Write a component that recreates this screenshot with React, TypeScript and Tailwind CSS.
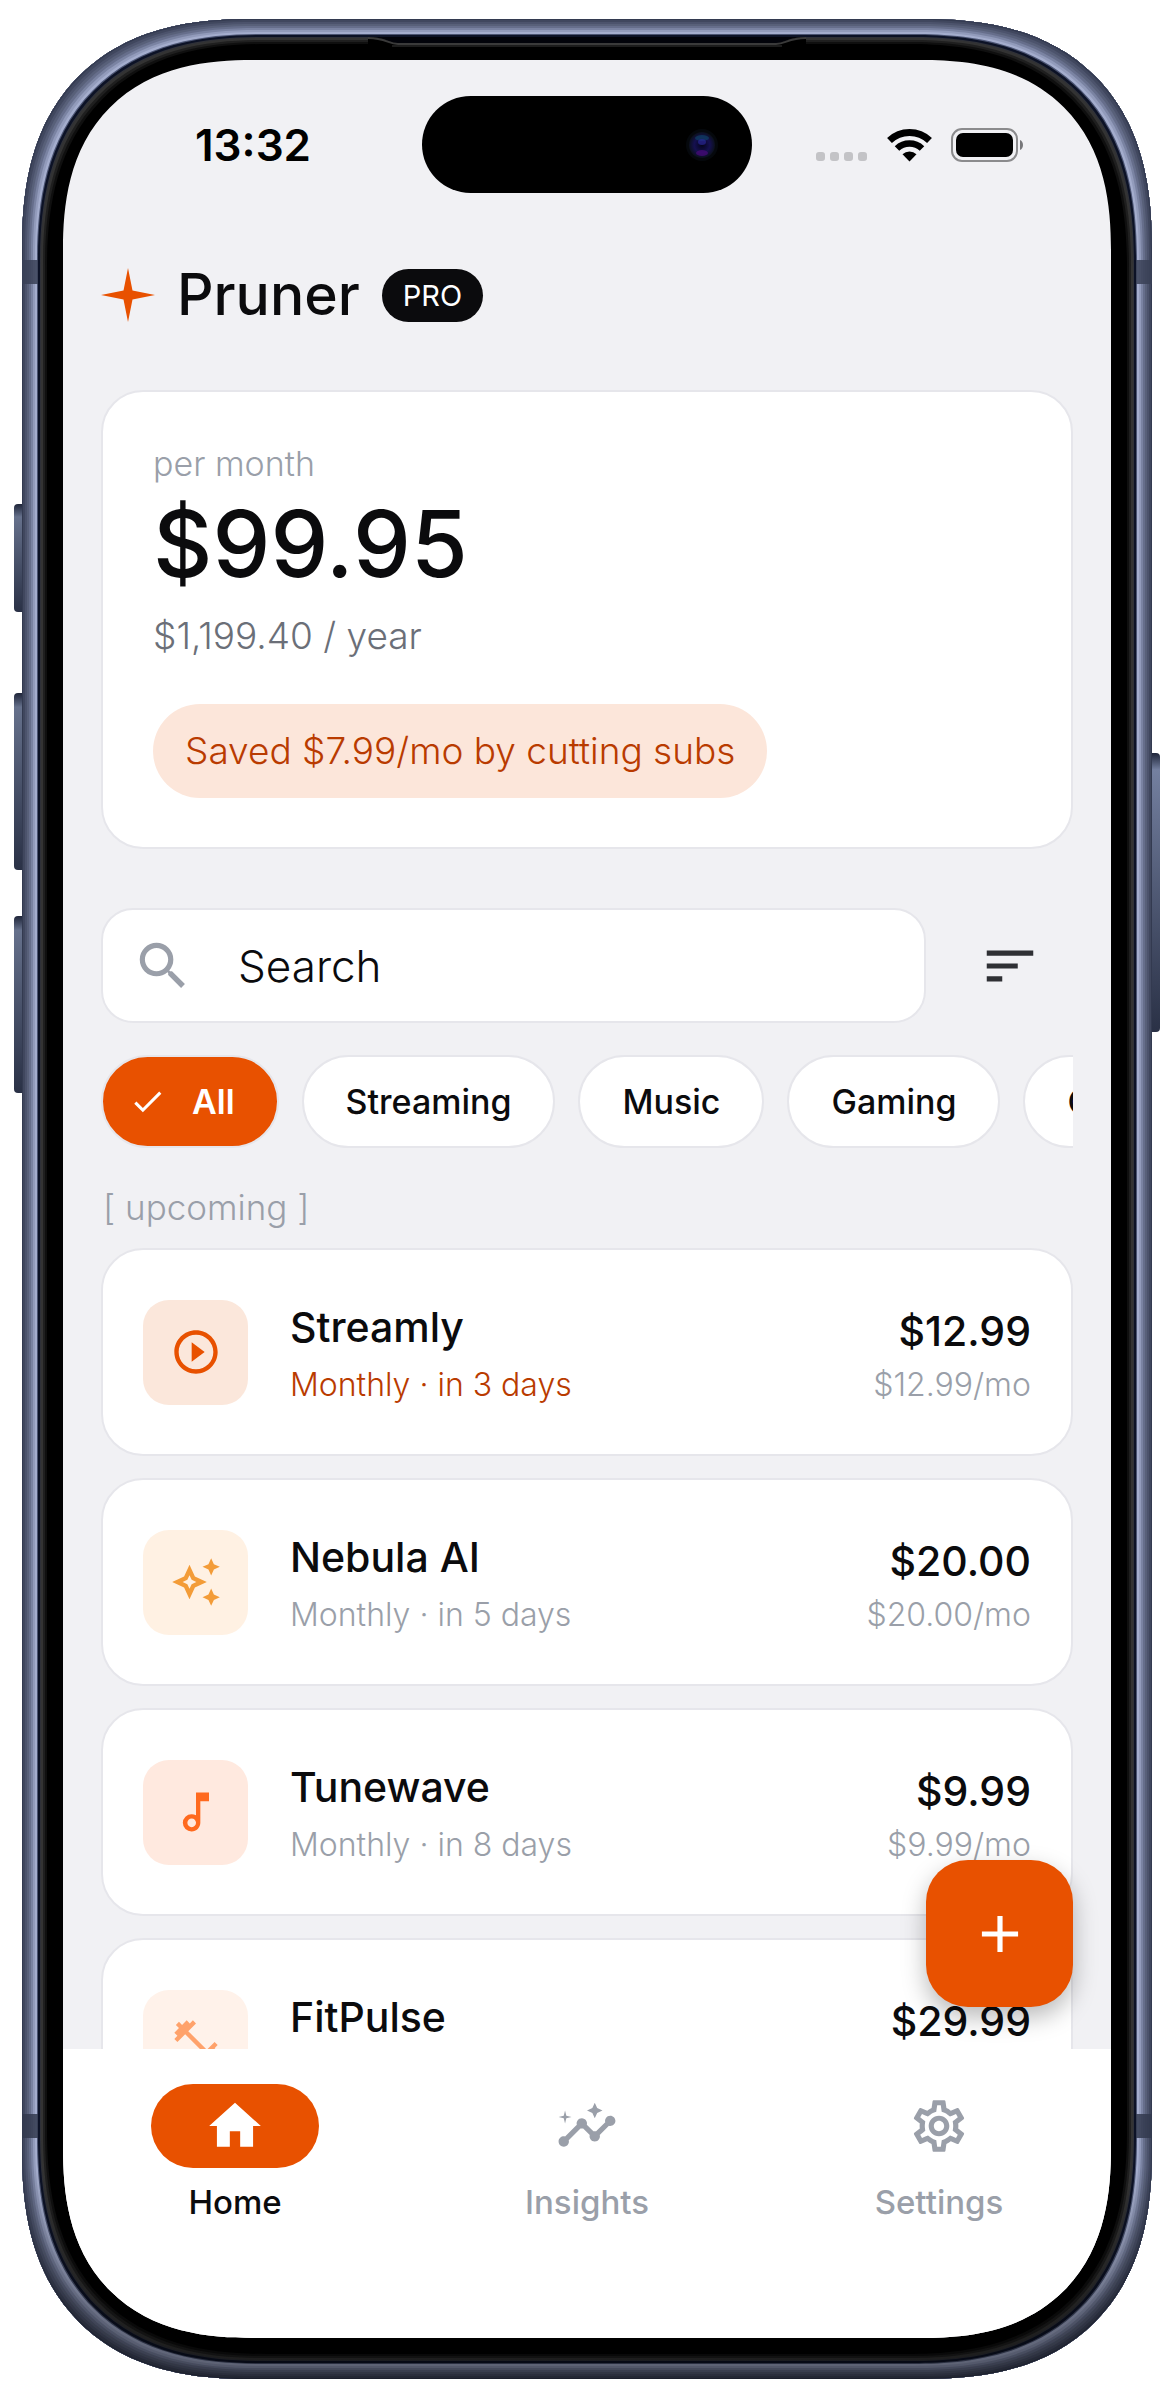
import { useState } from 'react';
import type { IconType } from 'react-icons';
import {
  MdAdd,
  MdCheck,
  MdFitnessCenter,
  MdHome,
  MdInsights,
  MdOutlineAutoAwesome,
  MdOutlineMusicNote,
  MdOutlineSettings,
  MdPlayCircleOutline,
  MdSearch,
  MdSort,
} from 'react-icons/md';

interface Subscription {
  name: string;
  due: string;
  price: string;
  icon: IconType;
  tile: string;
  soon?: boolean;
}

const subscriptions: Subscription[] = [
  { name: 'Streamly', due: 'Monthly · in 3 days', price: '$12.99', icon: MdPlayCircleOutline, tile: 'bg-[#fbe7db] text-[#e85100]', soon: true },
  { name: 'Nebula AI', due: 'Monthly · in 5 days', price: '$20.00', icon: MdOutlineAutoAwesome, tile: 'bg-[#fff1e3] text-[#f39c38]' },
  { name: 'Tunewave', due: 'Monthly · in 8 days', price: '$9.99', icon: MdOutlineMusicNote, tile: 'bg-[#ffe9df] text-[#ff6a1f]' },
  { name: 'FitPulse', due: 'Monthly · in 12 days', price: '$29.99', icon: MdFitnessCenter, tile: 'bg-[#fff2ea] text-[#ffa26b]' },
];

const categories = ['All', 'Streaming', 'Music', 'Gaming', 'Cloud'];

const tabs = [
  { label: 'Home', icon: MdHome },
  { label: 'Insights', icon: MdInsights },
  { label: 'Settings', icon: MdOutlineSettings },
];

// Metal rim, dark seam and the soft edge of the glass
function DeviceFrame({ children }: { children: React.ReactNode }) {
  return (
    <div className="relative h-full">
      {/* Side buttons */}
      <div className="absolute top-[485px] -left-2 h-[108px] w-3 rounded-l-sm bg-linear-to-b from-[#20263a] via-[#66718c] via-12% to-[#2a3146]" />
      <div className="absolute top-[674px] -left-2 h-[177px] w-3 rounded-l-sm bg-linear-to-b from-[#20263a] via-[#66718c] via-8% to-[#2a3146]" />
      <div className="absolute top-[897px] -left-2 h-[177px] w-3 rounded-l-sm bg-linear-to-b from-[#20263a] via-[#66718c] via-8% to-[#2a3146]" />
      <div className="absolute top-[734px] -right-2 h-[279px] w-3 rounded-r-sm bg-linear-to-b from-[#20263a] via-[#7480a0] via-6% to-[#2a3146]" />

      <div className="relative h-full overflow-hidden rounded-[230px] bg-black p-[41px] [corner-shape:superellipse(1.28)] shadow-[inset_0_0_0_1px_#333a50,inset_0_0_0_3px_#40475e,inset_0_0_0_5px_#4c536c,inset_0_0_0_7px_#586079,inset_0_0_0_9px_#666e8b,inset_0_0_0_11px_#7a83a2,inset_0_0_0_13px_#929bbb,inset_0_0_0_15px_#a4adcd,inset_0_0_0_16px_#4a5371,inset_0_0_0_18px_#0c1226,inset_0_0_0_19px_#2f3138,inset_0_0_0_21px_#333333,inset_0_0_0_23px_#1f1f1f,inset_0_0_0_25px_#0f0f0f]">
        {/* Rim is darker towards the bottom */}
        <div className="absolute inset-0 bg-linear-to-b from-transparent from-91% via-black/35 via-97% to-black/45" />

        {/* Antenna bands */}
        <div className="absolute top-[241px] left-0 h-6 w-4 bg-[#3a4156]/85" />
        <div className="absolute top-[241px] right-0 h-6 w-4 bg-[#3a4156]/85" />
        <div className="absolute bottom-[241px] left-0 h-6 w-4 bg-[#333a4e]/85" />
        <div className="absolute right-0 bottom-[241px] h-6 w-4 bg-[#333a4e]/85" />

        {/* Earpiece slot */}
        <svg className="absolute top-[18px] left-1/2 h-4 w-[438px] -translate-x-1/2" viewBox="0 0 438 16" aria-hidden="true">
          <path d="M0 0C18 0 20 6 30 6H408C418 6 420 0 438 0V16H0Z" fill="#000" />
          <path d="M0 0H438C420 0 418 6 408 6H30C20 6 18 0 0 0Z" fill="#02030a" />
          <path d="M0 1C18 1 20 7 30 7H408C418 7 420 1 438 1" fill="none" stroke="#3a3a3a" strokeWidth="2" />
          <path d="M24 9H414" stroke="#1c1c1c" strokeWidth="2" />
        </svg>

        {children}
      </div>
    </div>
  );
}

function StatusBar() {
  return (
    <div className="grid shrink-0 grid-cols-[1fr_auto_1fr] items-center pt-9 text-black">
      <time className="pl-[132px] text-[44px] leading-[52px] font-semibold">13:32</time>
      <div className="flex h-[97px] w-[330px] items-center justify-end rounded-full bg-black pr-[34px]">
        <svg className="h-8 w-8" viewBox="0 0 32 32" aria-hidden="true">
          <defs>
            <radialGradient id="lens">
              <stop offset="0" stopColor="#05051c" />
              <stop offset="0.6" stopColor="#151050" />
              <stop offset="1" stopColor="#0b101c" />
            </radialGradient>
          </defs>
          <circle cx="16" cy="16" r="16" fill="#05080c" />
          <circle cx="16" cy="16" r="13" fill="url(#lens)" />
          <ellipse cx="16" cy="9" rx="7" ry="3" fill="#0d4a68" opacity="0.6" />
          <ellipse cx="16" cy="13" rx="4" ry="3" fill="#2a2796" opacity="0.7" />
          <ellipse cx="16" cy="24" rx="6" ry="3" fill="#4a0a7a" opacity="0.7" />
        </svg>
      </div>
      <div className="flex items-center justify-end gap-[19px] pr-[87px]">
        <svg className="h-[34px] w-[52px]" viewBox="0 0 52 34" fill="#c3c3c6" aria-hidden="true">
          <rect x="0" y="24" width="9" height="9" rx="3" />
          <rect x="14" y="24" width="9" height="9" rx="3" />
          <rect x="28" y="24" width="9" height="9" rx="3" />
          <rect x="42" y="24" width="9" height="9" rx="3" />
        </svg>
        <svg className="h-[34px] w-[45px]" viewBox="0 0 45 34" aria-hidden="true">
          <path d="M2.500 12.500A29 29 0 0 1 42.500 12.500" fill="none" stroke="#000" strokeWidth="7" />
          <path d="M10 20.500A18 18 0 0 1 35 20.500" fill="none" stroke="#000" strokeWidth="6.500" />
          <path d="M22.500 33.500L15.500 26.200A10.500 10.500 0 0 1 29.500 26.200Z" />
        </svg>
        <svg className="h-[34px] w-[73px]" viewBox="0 0 73 34" aria-hidden="true">
          <rect x="1" y="1" width="65" height="32" rx="10" fill="none" stroke="#8b8b8d" strokeWidth="2" />
          <rect x="5" y="5" width="57" height="24" rx="7" />
          <path d="M69 12C73 13.500 73 20.500 69 22Z" fill="#77777a" />
        </svg>
      </div>
    </div>
  );
}

function SubscriptionCard({ name, due, price, icon: Icon, tile, soon }: Subscription) {
  return (
    <li className="flex h-[208px] shrink-0 items-center rounded-[42px] border-2 border-[#e6e6eb] bg-white px-10">
      <div className={`flex h-[105px] w-[105px] items-center justify-center rounded-[26px] ${tile}`}>
        <Icon className="h-[52px] w-[52px]" />
      </div>
      <div className="ml-[42px] flex flex-1 flex-col gap-[14px] pt-1">
        <h3 className="text-[41px] leading-[48px] font-medium">{name}</h3>
        <p className={`text-[32px] leading-10 font-light ${soon ? 'text-[#b93b00]' : 'text-[#9a9fa9]'}`}>{due}</p>
      </div>
      <div className="flex flex-col gap-[10px] pt-2 text-right">
        <span className="text-[41px] leading-[48px] font-medium">{price}</span>
        <span className="text-[32px] leading-10 font-light text-[#9a9fa9]">{price}/mo</span>
      </div>
    </li>
  );
}

export default function App() {
  const [category, setCategory] = useState('All');
  const [tab, setTab] = useState('Home');

  return (
    <div className="h-screen bg-white pt-[19px] pr-[21px] pb-5 pl-[22px] font-['Inter',sans-serif] text-[#0b0b0d]">
      <DeviceFrame>
        <div className="relative flex h-full flex-col overflow-hidden rounded-[190px] bg-[#f1f1f4] [corner-shape:superellipse(1.28)]">
          <StatusBar />

          <main className="relative flex min-h-0 flex-1 flex-col overflow-hidden px-[38px]">
            <header className="mt-[67px] flex h-[70px] shrink-0 items-center">
              <svg className="h-[54px] w-[54px]" viewBox="0 0 54 54" fill="#e85100" aria-hidden="true">
                <path d="M27 0L31.500 22.500L54 27L31.500 31.500L27 54L22.500 31.500L0 27L22.500 22.500Z" />
              </svg>
              <h1 className="ml-[22px] text-[57px] leading-[70px] font-medium">Pruner</h1>
              <span className="ml-[22px] rounded-full bg-[#0b0b0d] px-[21px] text-[29px] leading-[53px] text-white">PRO</span>
            </header>

            {/* Monthly total */}
            <section className="mt-[60px] shrink-0 rounded-[42px] border-2 border-[#e6e6eb] bg-white px-[50px] pt-[52px] pb-[49px]">
              <p className="text-[34px] leading-10 font-light text-[#9a9fa9]">per month</p>
              <p className="mt-2 text-[92px] leading-[104px] font-medium">$99.95</p>
              <p className="mt-4 text-[37px] leading-[48px] font-light text-[#6b6f78]">$1,199.40 / year</p>
              <p className="mt-11 w-fit rounded-full bg-[#fce6da] px-8 text-[37px] leading-[94px] font-light text-[#b93b00]">
                Saved $7.99/mo by cutting subs
              </p>
            </section>

            <div className="mt-[59px] flex shrink-0 items-center gap-[21px]">
              <label className="flex h-[115px] min-w-0 flex-1 items-center gap-[44px] rounded-[32px] border-2 border-[#e6e6eb] bg-white px-[29px]">
                <MdSearch className="h-[62px] w-[62px] shrink-0 text-[#9a9fa9]" />
                <input
                  type="text"
                  aria-label="Search subscriptions"
                  placeholder="Search"
                  className="min-w-0 flex-1 text-[44px] leading-[52px] font-light outline-none placeholder:text-[#0b0b0d] placeholder:opacity-100"
                />
              </label>
              <button type="button" aria-label="Sort" className="flex h-[115px] w-[126px] shrink-0 items-center justify-center text-[#2f3034]">
                <MdSort className="h-[62px] w-[62px]" />
              </button>
            </div>

            {/* Category filter */}
            <div className="mt-8 flex shrink-0 gap-[23px] overflow-hidden">
              {categories.map((c) => (
                <button
                  key={c}
                  type="button"
                  aria-pressed={c === category}
                  onClick={() => setCategory(c)}
                  className={`flex h-[93px] shrink-0 items-center rounded-full border-2 border-[#e6e6eb] text-[34px] ${
                    c === category ? 'gap-[26px] bg-[#e85100] pr-[42px] pl-[26px] font-semibold text-white' : 'bg-white px-[42px] font-medium'
                  }`}
                >
                  {c === category && <MdCheck className="h-[37px] w-[37px]" />}
                  {c}
                </button>
              ))}
            </div>

            <h2 className="mt-[39px] shrink-0 px-[2px] text-[35px] leading-10 font-light text-[#9a9fa9]">[ upcoming ]</h2>

            <ul className="mt-[21px] flex flex-col gap-[22px]">
              {subscriptions.map((s) => (
                <SubscriptionCard key={s.name} {...s} />
              ))}
            </ul>

            <button
              type="button"
              aria-label="Add subscription"
              className="absolute right-[38px] bottom-[42px] flex h-[147px] w-[147px] items-center justify-center rounded-[42px] bg-[#e85100] text-white shadow-[0_10px_24px_rgba(0,0,0,0.28)]"
            >
              <MdAdd className="h-[62px] w-[62px]" />
            </button>
          </main>

          <nav className="grid shrink-0 grid-cols-3 gap-2 bg-white pt-[35px] pb-[116px]">
            {tabs.map(({ label, icon: Icon }) => (
              <a
                key={label}
                href={`#${label.toLowerCase()}`}
                onClick={() => setTab(label)}
                className={`flex flex-col items-center gap-[14px] text-[33px] leading-10 font-medium ${tab === label ? 'text-[#0b0b0d]' : 'text-[#9a9fa9]'}`}
              >
                <span className={`flex h-[84px] w-[168px] items-center justify-center rounded-full ${tab === label ? 'bg-[#e85100] text-white' : ''}`}>
                  <Icon className="h-[62px] w-[62px]" />
                </span>
                {label}
              </a>
            ))}
          </nav>
        </div>
      </DeviceFrame>
    </div>
  );
}
